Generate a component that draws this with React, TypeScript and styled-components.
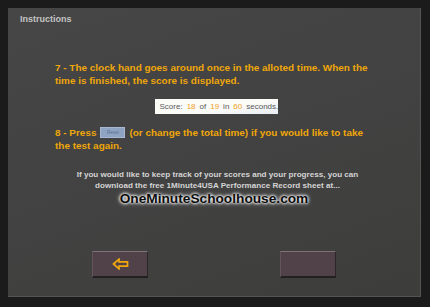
import React from "react";
import styled, { createGlobalStyle } from "styled-components";

const Global = createGlobalStyle`
  html, body { margin: 0; padding: 0; background: #1b1b1b; }
  body { width: 430px; height: 307px; overflow: hidden; font-family: "Liberation Sans", Arial, sans-serif; }
`;

const Screen = styled.div`
  width: 430px;
  height: 307px;
  padding: 8px 0 0 8px;
  box-sizing: border-box;
`;

const Panel = styled.div`
  width: 413px;
  height: 289px;
  box-sizing: border-box;
  background: linear-gradient(160deg, #464646 0%, #424242 50%, #3d3d3b 100%);
  border-right: 1px solid #545454;
  border-bottom: 1px solid #545454;
  display: flex;
  flex-direction: column;
`;

const Title = styled.div`
  font-size: 9px;
  font-weight: bold;
  color: #c4c4c4;
  padding: 6px 0 0 12px;
  height: 11px;
`;

const Step = styled.p<{ $top: number; $width: number }>`
  margin: ${(p) => p.$top}px 0 0 47px;
  width: ${(p) => p.$width}px;
  font-size: 9.95px;
  font-weight: bold;
  line-height: 12.5px;
  color: #f0a70a;
`;

const ScoreRow = styled.div`
  display: flex;
  justify-content: center;
  margin-top: 12px;
  padding-left: 4px;
`;

const ScoreBox = styled.div`
  width: 123px;
  height: 15px;
  box-sizing: border-box;
  background: linear-gradient(170deg, #fbfbf8 60%, #e8eef5 100%);
  display: flex;
  align-items: center;
  padding-left: 5px;
  font-size: 8px;
  color: #5a5a5a;
  white-space: nowrap;
`;

const Num = styled.span`
  color: #f0a020;
  margin: 0 4px;
`;

const ResetButton = styled.span`
  display: inline-block;
  width: 25px;
  height: 11px;
  vertical-align: middle;
  margin: -2px 4px 0 4px;
  background: #8fa3c2;
  border: 1px solid #a8b8d2;
  box-sizing: border-box;
  font-size: 4.5px;
  font-weight: normal;
  color: #5c6f8c;
  text-align: center;
  line-height: 9px;
`;

const Note = styled.p`
  margin: 17px 0 0 0;
  text-align: center;
  font-size: 8.1px;
  font-weight: bold;
  line-height: 11px;
  color: #d4d4d4;
  padding-left: 7px;
`;

const Url = styled.div`
  text-align: center;
  font-size: 13.7px;
  font-weight: bold;
  color: #0d0d0d;
  line-height: 16px;
  text-shadow: 0 0 3px #ffffff, 0 0 3px #ffffff, 0 0 5px rgba(255, 255, 255, 0.8);
`;

const ButtonRow = styled.div`
  display: flex;
  justify-content: space-between;
  margin-top: auto;
  margin-bottom: 18px;
  padding: 0 84px 0 84px;
`;

const NavButton = styled.div`
  width: 56px;
  height: 27px;
  box-sizing: border-box;
  background: #514249;
  border-top: 1px solid #7e7278;
  border-left: 1px solid #625459;
  border-right: 1px solid #2c2628;
  border-bottom: 2px solid #241f21;
  display: flex;
  align-items: center;
  justify-content: center;
`;

const BackArrow = () => (
  <svg width="17" height="12" viewBox="0 0 17 12">
    <path
      d="M1.5 6 L7 1.2 L7 3.8 L15.5 3.8 L15.5 8.2 L7 8.2 L7 10.8 Z"
      fill="none"
      stroke="#f2a80c"
      strokeWidth="1.7"
      strokeLinejoin="miter"
    />
  </svg>
);

export default function App() {
  return (
    <>
      <Global />
      <Screen>
        <Panel>
          <Title>Instructions</Title>
          <Step $top={37} $width={325}>
            7 - The clock hand goes around once in the alloted time. When the time is finished, the score is displayed.
          </Step>
          <ScoreRow>
            <ScoreBox>
              Score:<Num>18</Num>of<Num>19</Num>in<Num>60</Num>seconds.
            </ScoreBox>
          </ScoreRow>
          <Step $top={13} $width={312}>
            8 - Press<ResetButton>Reset</ResetButton>(or change the total time) if you would like to take the test again.
          </Step>
          <Note>
            If you would like to keep track of your scores and your progress, you can
            <br />
            download the free 1Minute4USA Performance Record sheet at...
          </Note>
          <Url>OneMinuteSchoolhouse.com</Url>
          <ButtonRow>
            <NavButton>
              <BackArrow />
            </NavButton>
            <NavButton />
          </ButtonRow>
        </Panel>
      </Screen>
    </>
  );
}
